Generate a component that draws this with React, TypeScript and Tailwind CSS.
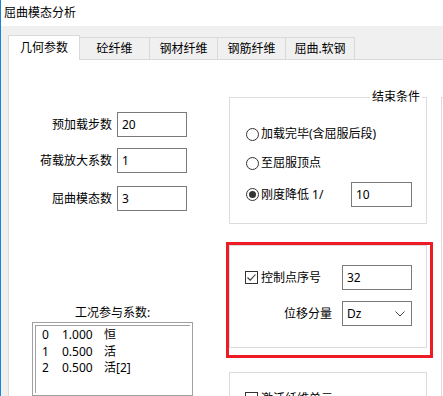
import React from "react";

function Field({ value, w, chevron }: { value: string; w: string; chevron?: boolean }) {
  return (
    <div className={`${w} h-[25px] border border-[#7a7a7a] bg-white flex items-center pl-[4px] pr-[6px] leading-none`}>
      <span className="flex-1">{value}</span>
      {chevron && (
        <svg width="10" height="6" viewBox="0 0 10 6" className="mt-[1px]">
          <path d="M0.5 0.5 L5 5 L9.5 0.5" fill="none" stroke="#444" strokeWidth="1" />
        </svg>
      )}
    </div>
  );
}

function Radio({ checked }: { checked?: boolean }) {
  return (
    <div className="w-[13px] h-[13px] rounded-full border border-[#333] bg-white flex items-center justify-center shrink-0">
      {checked && <div className="w-[7px] h-[7px] rounded-full bg-[#333]" />}
    </div>
  );
}

function Check({ checked }: { checked?: boolean }) {
  return (
    <div className="w-[13px] h-[13px] border border-[#333] bg-white shrink-0 flex items-center justify-center">
      {checked && (
        <svg width="11" height="11" viewBox="0 0 11 11">
          <path d="M1.5 5.5 L4.2 8.2 L9.5 2.5" fill="none" stroke="#333" strokeWidth="1.1" />
        </svg>
      )}
    </div>
  );
}

export default function App() {
  const tabs = [
    { t: "砼纤维", w: "w-[70px]" },
    { t: "钢材纤维", w: "w-[68px]" },
    { t: "钢筋纤维", w: "w-[68px]" },
    { t: "屈曲.软钢", w: "w-[69px]" },
  ];
  const list = [
    ["0", "1.000", "恒"],
    ["1", "0.500", "活"],
    ["2", "0.500", "活[2]"],
  ];
  return (
    <div className="w-[443px] h-[396px] overflow-hidden bg-[#f0f0f0] border-l border-[#1883d7] flex flex-col text-[12px] text-black font-['Noto_Sans','Noto_Sans_CJK_SC',sans-serif]">
      {/* title bar */}
      <div className="h-[26px] shrink-0 bg-white flex items-center pl-[3px] leading-none">
        <span>屈曲模态分析</span>
      </div>
      {/* body */}
      <div className="flex-1 flex flex-col pl-[7px] pt-[9px] min-h-0">
        {/* tabs */}
        <div className="h-[24px] flex items-end shrink-0">
          <div className="relative z-10 -mb-px w-[72px] h-[25px] bg-white border-l border-t border-r border-[#d9d9d9] flex items-center justify-center leading-none">
            几何参数
          </div>
          {tabs.map((tab) => (
            <div
              key={tab.t}
              className={`${tab.w} h-[22px] border-t border-r border-[#d9d9d9] flex items-center justify-center leading-none pt-px`}
            >
              {tab.t}
            </div>
          ))}
        </div>
        {/* panel */}
        <div className="flex-1 w-[500px] bg-white border-t border-l border-[#d9d9d9] flex min-h-0">
          {/* left column */}
          <div className="w-[217px] shrink-0 flex flex-col">
            <div className="mt-[52px] flex items-center gap-[5px] h-[25px]">
              <span className="w-[103px] text-right">预加载步数</span>
              <Field value="20" w="w-[70px]" />
            </div>
            <div className="mt-[11px] flex items-center gap-[5px] h-[25px]">
              <span className="w-[103px] text-right">荷载放大系数</span>
              <Field value="1" w="w-[70px]" />
            </div>
            <div className="mt-[13px] flex items-center gap-[5px] h-[25px]">
              <span className="w-[103px] text-right">屈曲模态数</span>
              <Field value="3" w="w-[70px]" />
            </div>
            <div className="mt-[94px] ml-[23px] w-[161px] text-center leading-[16px] h-[16px]">工况参与系数:</div>
            <div className="mt-px ml-[23px] w-[161px] h-[120px] border border-[#a0a0a0] p-[2px] bg-white">
              <div className="h-full border-l border-t border-[#a0a0a0] pt-[1px]">
                {list.map((r) => (
                  <div key={r[0]} className="h-[16.5px] flex items-center leading-none">
                    <span className="w-[26px] pl-[6px] shrink-0">{r[0]}</span>
                    <span className="w-[42px] shrink-0">{r[1]}</span>
                    <span>{r[2]}</span>
                  </div>
                ))}
              </div>
            </div>
          </div>
          {/* right column */}
          <div className="pl-[3px] shrink-0 flex flex-col">
            <div className="mt-[37px] relative w-[198px] border border-[#dcdcdc] pt-[26px] pl-[16px] pr-[14px] pb-[16px] flex flex-col">
              <span className="absolute right-[4px] top-[-9px] px-[2px] bg-white leading-[16px]">结束条件</span>
              <div className="h-[20px] flex items-center gap-[2px]">
                <Radio />
                <span>加载完毕(含屈服后段)</span>
              </div>
              <div className="mt-[9px] h-[20px] flex items-center gap-[2px]">
                <Radio />
                <span>至屈服顶点</span>
              </div>
              <div className="mt-[9px] h-[25px] flex items-center gap-[2px]">
                <Radio checked />
                <span>刚度降低 1/</span>
                <div className="ml-auto">
                  <Field value="10" w="w-[61px]" />
                </div>
              </div>
            </div>

            <div className="mt-[21px] relative w-[198px] border border-[#dcdcdc] pt-[19px] pl-[15px] pr-[14px] pb-[21px] flex flex-col">
              <div className="h-[25px] flex items-center">
                <Check checked />
                <span className="ml-[3px] flex-1">控制点序号</span>
                <Field value="32" w="w-[70px]" />
              </div>
              <div className="mt-[11px] h-[25px] flex items-center justify-end gap-[10px]">
                <span>位移分量</span>
                <Field value="Dz" w="w-[70px]" chevron />
              </div>
              <div className="absolute left-[-4px] top-[-4px] right-[-7px] bottom-[-11px] border-[3px] border-[#ed1c24]" />
            </div>

            <div className="mt-[24px] w-[198px] h-[60px] border border-[#dcdcdc] pt-[19px] pl-[15px] flex flex-col">
              <div className="h-[13px] flex items-center">
                <Check />
                <span className="ml-[3px] leading-[13px]">激活纤维单元</span>
              </div>
            </div>
          </div>
          {/* third column edge */}
          <div className="ml-[14px] mt-[37px] w-[80px] h-[400px] border-l border-t border-[#dcdcdc]" />
        </div>
      </div>
    </div>
  );
}
